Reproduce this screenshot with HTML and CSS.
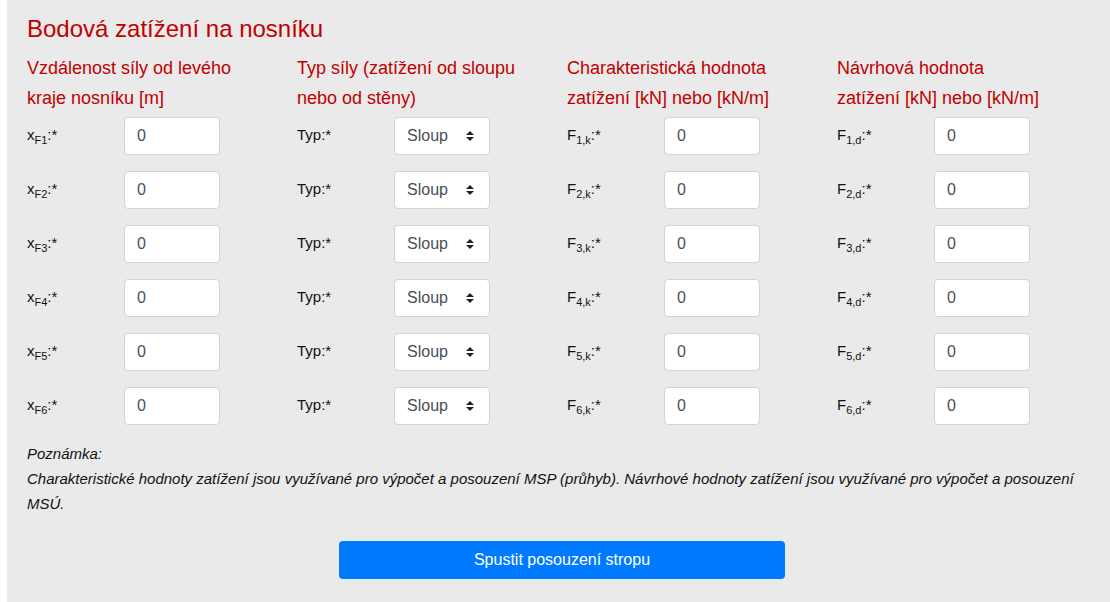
FILE: index.html
```html
<!DOCTYPE html>
<html lang="cs">
<head>
<meta charset="utf-8">
<link rel="stylesheet" href="styles.css">
</head>
<body>
<div class="panel">
  <h2 class="title">Bodová zatížení na nosníku</h2>
  <div class="grid">
    <div class="head">Vzdálenost síly od levého<br>kraje nosníku [m]</div>
    <div class="head">Typ síly (zatížení od sloupu<br>nebo od stěny)</div>
    <div class="head">Charakteristická hodnota<br>zatížení [kN] nebo [kN/m]</div>
    <div class="head">Návrhová hodnota<br>zatížení [kN] nebo [kN/m]</div>

    <div class="field"><label>x<sub>F1</sub>:*</label><input class="ctl" value="0"></div>
    <div class="field"><label>Typ:*</label><div class="ctl sel">Sloup<span class="arr"></span></div></div>
    <div class="field"><label>F<sub>1,k</sub>:*</label><input class="ctl" value="0"></div>
    <div class="field"><label>F<sub>1,d</sub>:*</label><input class="ctl" value="0"></div>

    <div class="field"><label>x<sub>F2</sub>:*</label><input class="ctl" value="0"></div>
    <div class="field"><label>Typ:*</label><div class="ctl sel">Sloup<span class="arr"></span></div></div>
    <div class="field"><label>F<sub>2,k</sub>:*</label><input class="ctl" value="0"></div>
    <div class="field"><label>F<sub>2,d</sub>:*</label><input class="ctl" value="0"></div>

    <div class="field"><label>x<sub>F3</sub>:*</label><input class="ctl" value="0"></div>
    <div class="field"><label>Typ:*</label><div class="ctl sel">Sloup<span class="arr"></span></div></div>
    <div class="field"><label>F<sub>3,k</sub>:*</label><input class="ctl" value="0"></div>
    <div class="field"><label>F<sub>3,d</sub>:*</label><input class="ctl" value="0"></div>

    <div class="field"><label>x<sub>F4</sub>:*</label><input class="ctl" value="0"></div>
    <div class="field"><label>Typ:*</label><div class="ctl sel">Sloup<span class="arr"></span></div></div>
    <div class="field"><label>F<sub>4,k</sub>:*</label><input class="ctl" value="0"></div>
    <div class="field"><label>F<sub>4,d</sub>:*</label><input class="ctl" value="0"></div>

    <div class="field"><label>x<sub>F5</sub>:*</label><input class="ctl" value="0"></div>
    <div class="field"><label>Typ:*</label><div class="ctl sel">Sloup<span class="arr"></span></div></div>
    <div class="field"><label>F<sub>5,k</sub>:*</label><input class="ctl" value="0"></div>
    <div class="field"><label>F<sub>5,d</sub>:*</label><input class="ctl" value="0"></div>

    <div class="field"><label>x<sub>F6</sub>:*</label><input class="ctl" value="0"></div>
    <div class="field"><label>Typ:*</label><div class="ctl sel">Sloup<span class="arr"></span></div></div>
    <div class="field"><label>F<sub>6,k</sub>:*</label><input class="ctl" value="0"></div>
    <div class="field"><label>F<sub>6,d</sub>:*</label><input class="ctl" value="0"></div>
  </div>
  <div class="note">
    <div>Poznámka:</div>
    <div>Charakteristické hodnoty zatížení jsou využívané pro výpočet a posouzení MSP (průhyb). Návrhové hodnoty zatížení jsou využívané pro výpočet a posouzení MSÚ.</div>
  </div>
  <button class="btn">Spustit posouzení stropu</button>
</div>
</body>
</html>
```

FILE: styles.css
```css
html, body {
  margin: 0;
  padding: 0;
  background: #ffffff;
  font-family: "Liberation Sans", Arial, sans-serif;
}
.panel {
  margin-left: 7px;
  background: #eaeaea;
  padding: 14px 0 24px 20px;
  min-height: 602px;
  box-sizing: border-box;
}
.title {
  margin: 0;
  font-size: 24px;
  font-weight: normal;
  line-height: 29px;
  color: #c00000;
}
.grid {
  margin-top: 10px;
  display: grid;
  grid-template-columns: repeat(4, 270px);
  row-gap: 16px;
}
.head {
  font-size: 18px;
  line-height: 30px;
  color: #c00000;
  white-space: nowrap;
  margin-bottom: -12px;
}
.field {
  display: flex;
  align-items: center;
  height: 38px;
}
.field label {
  width: 97px;
  font-size: 15px;
  line-height: 17px;
  margin-bottom: 3px;
  color: #111;
}
.field sub {
  font-size: 11px;
  vertical-align: -4px;
  line-height: 0;
}
.ctl {
  box-sizing: border-box;
  width: 96px;
  height: 38px;
  border: 1px solid #ced4da;
  border-radius: 4px;
  background: #fff;
  padding: 0 12px;
  font-family: "Liberation Sans", Arial, sans-serif;
  font-size: 16px;
  color: #495057;
  outline: none;
}
.sel {
  display: flex;
  align-items: center;
  justify-content: space-between;
}
.arr {
  position: relative;
  width: 8px;
  height: 10px;
  margin-right: 3px;
}
.arr::before, .arr::after {
  content: "";
  position: absolute;
  left: 0;
  border-left: 4px solid transparent;
  border-right: 4px solid transparent;
}
.arr::before {
  top: 0;
  border-bottom: 4px solid #222;
}
.arr::after {
  bottom: 0;
  border-top: 4px solid #222;
}
.note {
  margin-top: 16px;
  font-style: italic;
  font-size: 15px;
  line-height: 25px;
  color: #111;
  width: 1070px;
}
.btn {
  display: block;
  margin: 25px 0 0 312px;
  width: 446px;
  height: 38px;
  border: none;
  border-radius: 4px;
  background: #007bff;
  color: #fff;
  font-family: "Liberation Sans", Arial, sans-serif;
  font-size: 16px;
}
```
